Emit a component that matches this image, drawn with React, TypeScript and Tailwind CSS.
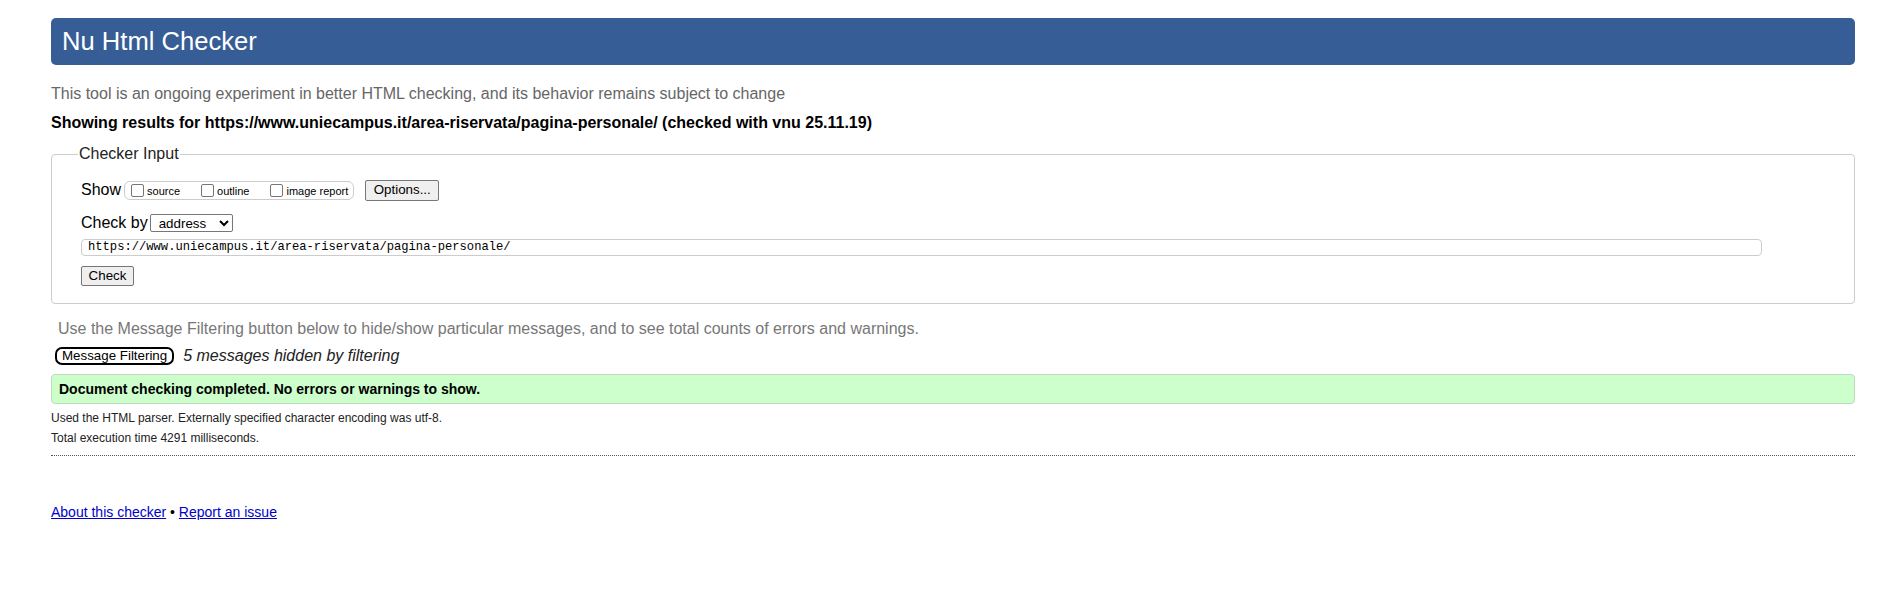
import clsx from "clsx";

const sans = "font-['Liberation_Sans',Arial,sans-serif]";
const mono = "font-['Liberation_Mono','DejaVu_Sans_Mono',monospace]";

function CheckOption({label}: {label: string}) {
    return (
        <label className="flex items-center mr-[21px] last:mr-0">
            <input type="checkbox" className="w-[13px] h-[13px] m-0 mr-[3px] appearance-none border border-[#767676] rounded-[2px] bg-white"/>
            <span className="text-[11px] leading-none mt-[2px]">{label}</span>
        </label>
    );
}

function GrayButton({children, className}: {children: React.ReactNode, className?: string}) {
    return (
        <button className={clsx("border border-[#767676] rounded-[2px] bg-[#efefef] text-[13.33px] leading-none", className)}>
            {children}
        </button>
    );
}

export default function App() {
    return (
        <div className={clsx("bg-white text-black ml-[51px] mr-[45px] pt-[18px] min-h-[600px]", sans)}>
            <h1 className="bg-[#365d95] text-white rounded-[5px] h-[47px] flex items-center pl-[11px] text-[25.6px] font-normal">
                Nu Html Checker
            </h1>

            <p className="text-[16px] text-[#666] mt-[19px] leading-[20px]">
                This tool is an ongoing experiment in better HTML checking, and its behavior remains subject to change
            </p>
            <p className="text-[16px] font-bold mt-[9px] leading-[20px]">
                Showing results for https://www.uniecampus.it/area-riservata/pagina-personale/ (checked with vnu 25.11.19)
            </p>

            <fieldset className="mt-[12px] border border-[#ccc] rounded-[4px] pl-[29px] pr-[22px] pb-[17px] pt-[4px]">
                <legend className="text-[16px] px-[1px] ml-[-3px] leading-[18px] text-[#222]">Checker Input</legend>
                <div className="flex items-center h-[22px] mt-[12px]">
                    <span className="text-[16px] mr-[3px]">Show</span>
                    <div className="flex items-center border border-[#ccc] rounded-[6px] h-[19px] pl-[6px] pr-[5px]">
                        <CheckOption label="source"/>
                        <CheckOption label="outline"/>
                        <CheckOption label="image report"/>
                    </div>
                    <GrayButton className="ml-[11px] h-[21px] w-[74px]">Options...</GrayButton>
                </div>
                <div className="flex items-center h-[20px] mt-[12px]">
                    <span className="text-[16px] mr-[2px]">Check by</span>
                    <select className="border border-[#767676] rounded-[2px] h-[18px] w-[83px] text-[13.33px] leading-none pl-[4px] bg-white" defaultValue="address">
                        <option>address</option>
                    </select>
                </div>
                <div className="mt-[6px] h-[17px] border border-[#ccc] rounded-[4px] flex items-center pl-[6px] mr-[70px]">
                    <span className={clsx("text-[12.15px] leading-none", mono)}>https://www.uniecampus.it/area-riservata/pagina-personale/</span>
                </div>
                <GrayButton className="mt-[10px] h-[20px] w-[53px] block">Check</GrayButton>
            </fieldset>

            <p className="text-[16px] text-[#777] mt-[15px] ml-[7px] leading-[20px]">
                Use the Message Filtering button below to hide/show particular messages, and to see total counts of errors and warnings.
            </p>
            <div className="flex items-center mt-[7px] ml-[4px] h-[20px]">
                <button className="border-2 border-black rounded-[7px] h-[18px] px-[5px] text-[13.33px] leading-none bg-white">Message Filtering</button>
                <span className="ml-[9px] italic text-[16px] text-[#222]">5 messages hidden by filtering</span>
            </div>

            <div className="mt-[8px] h-[30px] bg-[#ccffcc] border border-[#bcdcbc] rounded-[4px] flex items-center pl-[7px]">
                <span className="text-[14px] font-bold">Document checking completed. No errors or warnings to show.</span>
            </div>
            <p className="text-[12px] mt-[4px] leading-[20px] text-[#222]">
                Used the HTML parser. Externally specified character encoding was utf-8.
            </p>
            <p className="text-[12px] leading-[20px] text-[#222]">Total execution time 4291 milliseconds.</p>
            <hr className="mt-[7px] border-0 border-t border-dotted border-[#555]"/>

            <p className="mt-[46px] text-[14px] leading-[20px]">
                <a href="#" className="text-[#00c] underline">About this checker</a>
                <span> • </span>
                <a href="#" className="text-[#00c] underline">Report an issue</a>
            </p>
        </div>
    );
}
